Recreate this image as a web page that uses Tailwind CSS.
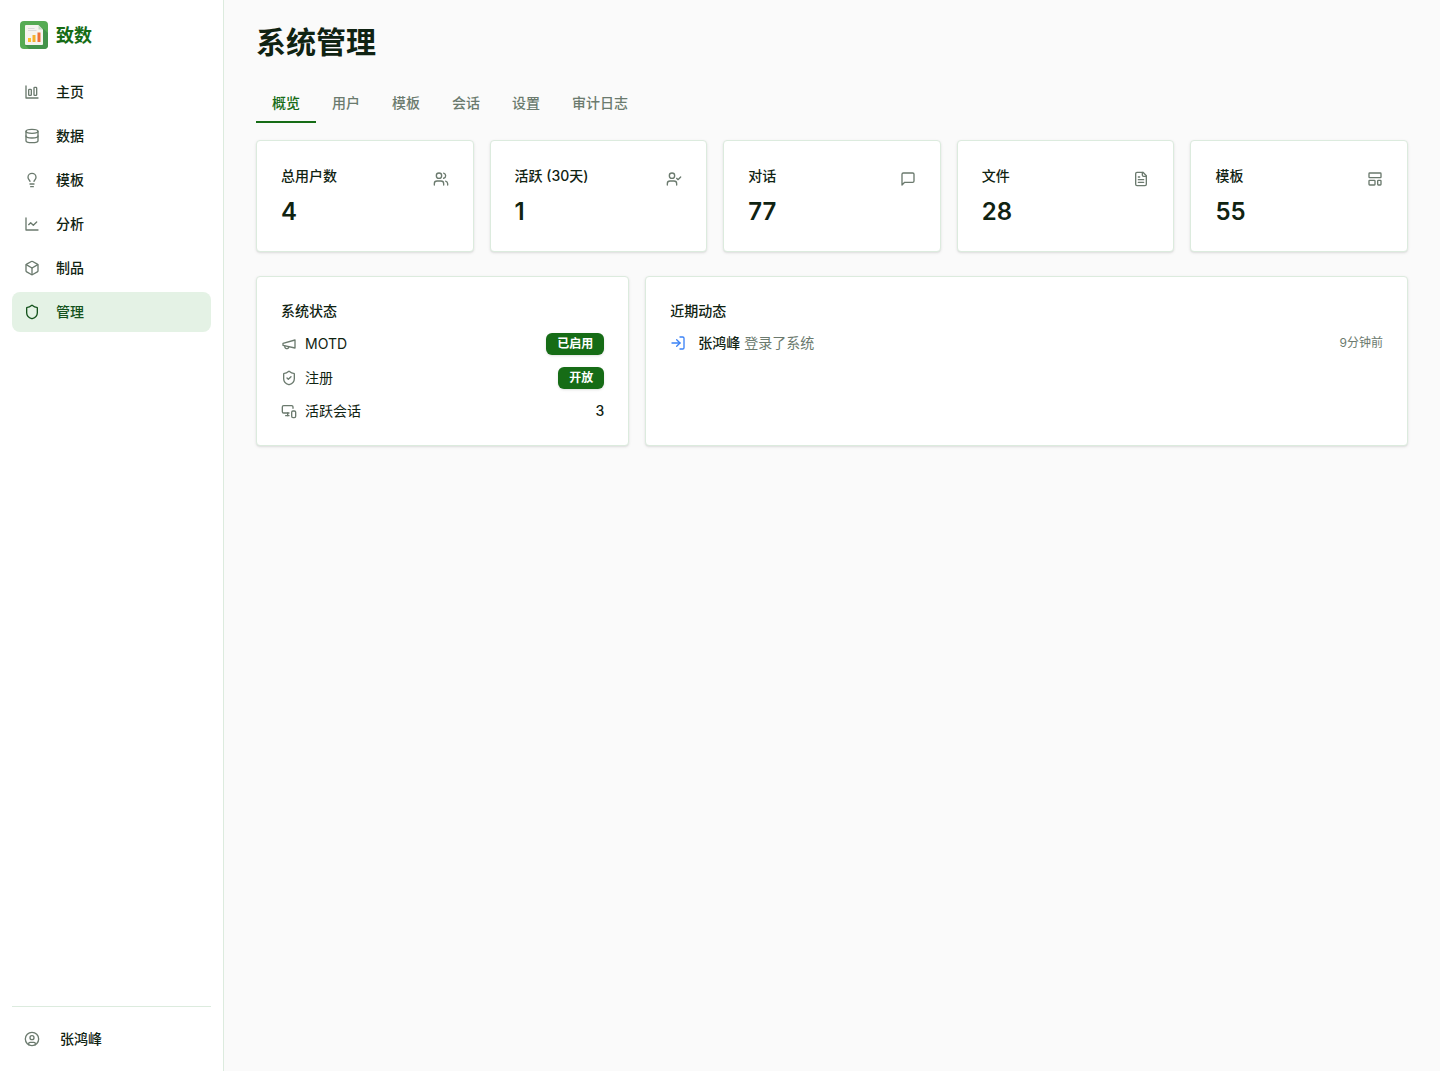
<!DOCTYPE html>
<html lang="zh-CN">

<head>
    <meta charset="UTF-8">
    <meta name="viewport" content="width=device-width, initial-scale=1.0">
    <title>致数 - 系统管理</title>

    <script src="https://cdn.jsdelivr.net/npm/@tailwindcss/browser@4"></script>
</head>

<body class="flex min-h-screen bg-[#fafafa] text-[#102312] text-sm font-['Inter','Noto_Sans_CJK_SC',sans-serif]">

    <!-- sidebar -->
    <aside class="flex flex-col w-56 shrink-0 px-3 pt-5 pb-3 bg-white border-r border-[#dcebde]">
        <a href="#" class="flex items-center gap-2 px-2 text-lg leading-7 font-bold text-[#166c16]">
            <svg class="size-7" viewBox="0 0 28 28">
                <rect width="28" height="28" rx="4" fill="#56ab53" />
                <path d="M19 4l9 8v12a4 4 0 0 1-4 4H9l-4-4z" fill="#43934a" />
                <path d="M6 4h12.500l4.500 4.500v14.500a1 1 0 0 1-1 1H6a1 1 0 0 1-1-1V5a1 1 0 0 1 1-1z" fill="#f6f4ef" />
                <path d="M18.500 4v4.500h4.500z" fill="#c9dcc6" />
                <path d="M8 7.500h6.500M8 9.500h8.500" stroke="#dadada" />
                <rect x="8" y="17" width="3" height="4" fill="#fbc02d" />
                <rect x="12.500" y="14" width="3" height="7" fill="#f5b02e" />
                <rect x="17.500" y="11.500" width="3" height="9.500" fill="#ee7038" />
            </svg>
            <span class="pt-0.5 leading-7">致数</span>
        </a>

        <nav class="mt-[22px]">
            <ul class="flex flex-col gap-1 font-medium">
                <li><a href="#" class="flex items-center gap-4 h-10 px-3 rounded-lg hover:bg-[#e4f2e5]">
                        <svg class="size-4 text-[#6b7a6e]" viewBox="0 0 24 24" fill="none" stroke="currentColor" stroke-width="2" stroke-linecap="round" stroke-linejoin="round">
                            <path d="M3 3v18h18" />
                            <rect x="15" y="5" width="4" height="12" rx="1" />
                            <rect x="7" y="8" width="4" height="9" rx="1" />
                        </svg>
                        主页</a></li>
                <li><a href="#" class="flex items-center gap-4 h-10 px-3 rounded-lg hover:bg-[#e4f2e5]">
                        <svg class="size-4 text-[#6b7a6e]" viewBox="0 0 24 24" fill="none" stroke="currentColor" stroke-width="2" stroke-linecap="round" stroke-linejoin="round">
                            <ellipse cx="12" cy="5" rx="9" ry="3" />
                            <path d="M3 5v14a9 3 0 0 0 18 0V5" />
                            <path d="M3 12a9 3 0 0 0 18 0" />
                        </svg>
                        数据</a></li>
                <li><a href="#" class="flex items-center gap-4 h-10 px-3 rounded-lg hover:bg-[#e4f2e5]">
                        <svg class="size-4 text-[#6b7a6e]" viewBox="0 0 24 24" fill="none" stroke="currentColor" stroke-width="2" stroke-linecap="round" stroke-linejoin="round">
                            <path d="M15 14c.2-1 .7-1.700 1.500-2.500 1-.9 1.500-2.200 1.500-3.500A6 6 0 0 0 6 8c0 1 .2 2.200 1.500 3.500.7.7 1.300 1.500 1.500 2.500" />
                            <path d="M9 18h6" />
                            <path d="M10 22h4" />
                        </svg>
                        模板</a></li>
                <li><a href="#" class="flex items-center gap-4 h-10 px-3 rounded-lg hover:bg-[#e4f2e5]">
                        <svg class="size-4 text-[#6b7a6e]" viewBox="0 0 24 24" fill="none" stroke="currentColor" stroke-width="2" stroke-linecap="round" stroke-linejoin="round">
                            <path d="M3 3v18h18" />
                            <path d="m19 9-5 5-4-4-3 3" />
                        </svg>
                        分析</a></li>
                <li><a href="#" class="flex items-center gap-4 h-10 px-3 rounded-lg hover:bg-[#e4f2e5]">
                        <svg class="size-4 text-[#6b7a6e]" viewBox="0 0 24 24" fill="none" stroke="currentColor" stroke-width="2" stroke-linecap="round" stroke-linejoin="round">
                            <path d="M21 8a2 2 0 0 0-1-1.730l-7-4a2 2 0 0 0-2 0l-7 4A2 2 0 0 0 3 8v8a2 2 0 0 0 1 1.730l7 4a2 2 0 0 0 2 0l7-4A2 2 0 0 0 21 16Z" />
                            <path d="m3.300 7 8.700 5 8.700-5" />
                            <path d="M12 22V12" />
                        </svg>
                        制品</a></li>
                <li><a href="#" aria-current="page" class="flex items-center gap-4 h-10 px-3 rounded-lg bg-[#e4f2e5] text-[#14521c]">
                        <svg class="size-4" viewBox="0 0 24 24" fill="none" stroke="currentColor" stroke-width="2" stroke-linecap="round" stroke-linejoin="round">
                            <path d="M20 13c0 5-3.500 7.500-7.660 8.950a1 1 0 0 1-.67-.01C7.500 20.500 4 18 4 13V6a1 1 0 0 1 1-1c2 0 4.500-1.200 6.240-2.720a1.170 1.170 0 0 1 1.520 0C14.510 3.810 17 5 19 5a1 1 0 0 1 1 1z" />
                        </svg>
                        管理</a></li>
            </ul>
        </nav>

        <div class="mt-auto pt-3 border-t border-[#dcebde]">
            <button class="flex items-center gap-5 w-full h-10 px-3 rounded-lg font-medium hover:bg-[#e4f2e5]">
                <svg class="size-4 text-[#6b7a6e]" viewBox="0 0 24 24" fill="none" stroke="currentColor" stroke-width="2" stroke-linecap="round" stroke-linejoin="round">
                    <circle cx="12" cy="12" r="10" />
                    <circle cx="12" cy="10" r="3" />
                    <path d="M7 20.660V19a2 2 0 0 1 2-2h6a2 2 0 0 1 2 2v1.660" />
                </svg>
                张鸿峰
            </button>
        </div>
    </aside>

    <main class="flex-1 min-w-0 px-8 py-6">
        <h1 class="text-3xl leading-9 font-bold">系统管理</h1>

        <!-- tabs -->
        <div role="tablist" class="flex mt-[23px] font-medium text-[#6b7a6e]">
            <button role="tab" aria-selected="true" class="px-4 pt-2.5 pb-2 border-b-2 border-[#166c16] text-[#166c16]">概览</button>
            <button role="tab" class="px-4 pt-2.5 pb-2 border-b-2 border-transparent">用户</button>
            <button role="tab" class="px-4 pt-2.5 pb-2 border-b-2 border-transparent">模板</button>
            <button role="tab" class="px-4 pt-2.5 pb-2 border-b-2 border-transparent">会话</button>
            <button role="tab" class="px-4 pt-2.5 pb-2 border-b-2 border-transparent">设置</button>
            <button role="tab" class="px-4 pt-2.5 pb-2 border-b-2 border-transparent">审计日志</button>
        </div>

        <!-- stat cards -->
        <div class="grid grid-cols-5 gap-4 mt-[17px]">
            <div class="flex justify-between p-6 bg-white border border-[#dcebde] rounded shadow-sm">
                <div>
                    <h3 class="leading-[22px] font-medium">总用户数</h3>
                    <p class="mt-2.5 text-2xl leading-[30px] font-semibold">4</p>
                </div>
                <svg class="size-4 mt-1.5 text-[#6b7a6e]" viewBox="0 0 24 24" fill="none" stroke="currentColor" stroke-width="2" stroke-linecap="round" stroke-linejoin="round">
                    <path d="M16 21v-2a4 4 0 0 0-4-4H6a4 4 0 0 0-4 4v2" />
                    <circle cx="9" cy="7" r="4" />
                    <path d="M22 21v-2a4 4 0 0 0-3-3.870" />
                    <path d="M16 3.130a4 4 0 0 1 0 7.750" />
                </svg>
            </div>
            <div class="flex justify-between p-6 bg-white border border-[#dcebde] rounded shadow-sm">
                <div>
                    <h3 class="leading-[22px] font-medium">活跃 (30天)</h3>
                    <p class="mt-2.5 text-2xl leading-[30px] font-semibold">1</p>
                </div>
                <svg class="size-4 mt-1.5 text-[#6b7a6e]" viewBox="0 0 24 24" fill="none" stroke="currentColor" stroke-width="2" stroke-linecap="round" stroke-linejoin="round">
                    <path d="M16 21v-2a4 4 0 0 0-4-4H6a4 4 0 0 0-4 4v2" />
                    <circle cx="9" cy="7" r="4" />
                    <path d="m16 11 2 2 4-4" />
                </svg>
            </div>
            <div class="flex justify-between p-6 bg-white border border-[#dcebde] rounded shadow-sm">
                <div>
                    <h3 class="leading-[22px] font-medium">对话</h3>
                    <p class="mt-2.5 text-2xl leading-[30px] font-semibold">77</p>
                </div>
                <svg class="size-4 mt-1.5 text-[#6b7a6e]" viewBox="0 0 24 24" fill="none" stroke="currentColor" stroke-width="2" stroke-linecap="round" stroke-linejoin="round">
                    <path d="M21 15a2 2 0 0 1-2 2H7l-4 4V5a2 2 0 0 1 2-2h14a2 2 0 0 1 2 2z" />
                </svg>
            </div>
            <div class="flex justify-between p-6 bg-white border border-[#dcebde] rounded shadow-sm">
                <div>
                    <h3 class="leading-[22px] font-medium">文件</h3>
                    <p class="mt-2.5 text-2xl leading-[30px] font-semibold">28</p>
                </div>
                <svg class="size-4 mt-1.5 text-[#6b7a6e]" viewBox="0 0 24 24" fill="none" stroke="currentColor" stroke-width="2" stroke-linecap="round" stroke-linejoin="round">
                    <path d="M15 2H6a2 2 0 0 0-2 2v16a2 2 0 0 0 2 2h12a2 2 0 0 0 2-2V7Z" />
                    <path d="M14 2v4a2 2 0 0 0 2 2h4" />
                    <path d="M10 9H8" />
                    <path d="M16 13H8" />
                    <path d="M16 17H8" />
                </svg>
            </div>
            <div class="flex justify-between p-6 bg-white border border-[#dcebde] rounded shadow-sm">
                <div>
                    <h3 class="leading-[22px] font-medium">模板</h3>
                    <p class="mt-2.5 text-2xl leading-[30px] font-semibold">55</p>
                </div>
                <svg class="size-4 mt-1.5 text-[#6b7a6e]" viewBox="0 0 24 24" fill="none" stroke="currentColor" stroke-width="2" stroke-linecap="round" stroke-linejoin="round">
                    <rect x="3" y="3" width="18" height="7" rx="1" />
                    <rect x="3" y="14" width="9" height="7" rx="1" />
                    <rect x="16" y="14" width="5" height="7" rx="1" />
                </svg>
            </div>
        </div>

        <div class="grid grid-cols-3 gap-4 mt-6">
            <!-- system status -->
            <section class="p-6 bg-white border border-[#dcebde] rounded shadow-sm">
                <h3 class="font-medium">系统状态</h3>
                <div class="flex flex-col gap-3 mt-3">
                    <div class="flex items-center justify-between">
                        <span class="flex items-center gap-2">
                            <svg class="size-4 text-[#6b7a6e]" viewBox="0 0 24 24" fill="none" stroke="currentColor" stroke-width="2" stroke-linecap="round" stroke-linejoin="round">
                                <path d="m3 11 18-5v12L3 14v-3z" />
                                <path d="M11.600 16.800a3 3 0 1 1-5.800-1.600" />
                            </svg>
                            MOTD
                        </span>
                        <span class="px-[11px] py-[3px] rounded-md bg-[#166c16] text-white text-xs font-semibold shadow-sm">已启用</span>
                    </div>
                    <div class="flex items-center justify-between">
                        <span class="flex items-center gap-2">
                            <svg class="size-4 text-[#6b7a6e]" viewBox="0 0 24 24" fill="none" stroke="currentColor" stroke-width="2" stroke-linecap="round" stroke-linejoin="round">
                                <path d="M20 13c0 5-3.500 7.500-7.660 8.950a1 1 0 0 1-.67-.01C7.500 20.500 4 18 4 13V6a1 1 0 0 1 1-1c2 0 4.500-1.200 6.240-2.720a1.170 1.170 0 0 1 1.520 0C14.510 3.810 17 5 19 5a1 1 0 0 1 1 1z" />
                                <path d="m9 12 2 2 4-4" />
                            </svg>
                            注册
                        </span>
                        <span class="px-[11px] py-[3px] rounded-md bg-[#166c16] text-white text-xs font-semibold shadow-sm">开放</span>
                    </div>
                    <div class="flex items-center justify-between">
                        <span class="flex items-center gap-2">
                            <svg class="size-4 text-[#6b7a6e]" viewBox="0 0 24 24" fill="none" stroke="currentColor" stroke-width="2" stroke-linecap="round" stroke-linejoin="round">
                                <path d="M18 8V6a2 2 0 0 0-2-2H4a2 2 0 0 0-2 2v7a2 2 0 0 0 2 2h8" />
                                <path d="M10 19v-3.960 3.150" />
                                <path d="M7 19h5" />
                                <rect x="16" y="12" width="6" height="10" rx="2" />
                            </svg>
                            活跃会话
                        </span>
                        <span class="font-medium">3</span>
                    </div>
                </div>
            </section>

            <!-- recent activity -->
            <section class="col-span-2 p-6 bg-white border border-[#dcebde] rounded shadow-sm">
                <h3 class="font-medium">近期动态</h3>
                <div class="flex items-center gap-3 mt-3">
                    <svg class="size-4 text-[#3b82f6]" viewBox="0 0 24 24" fill="none" stroke="currentColor" stroke-width="2" stroke-linecap="round" stroke-linejoin="round">
                        <path d="M15 3h4a2 2 0 0 1 2 2v14a2 2 0 0 1-2 2h-4" />
                        <path d="m10 17 5-5-5-5" />
                        <path d="M15 12H3" />
                    </svg>
                    <p class="flex-1 text-[#6b7a6e]"><span class="font-medium text-[#102312]">张鸿峰</span> 登录了系统</p>
                    <time class="text-xs text-[#6b7a6e]">9分钟前</time>
                </div>
            </section>
        </div>
    </main>

</body>

</html>
